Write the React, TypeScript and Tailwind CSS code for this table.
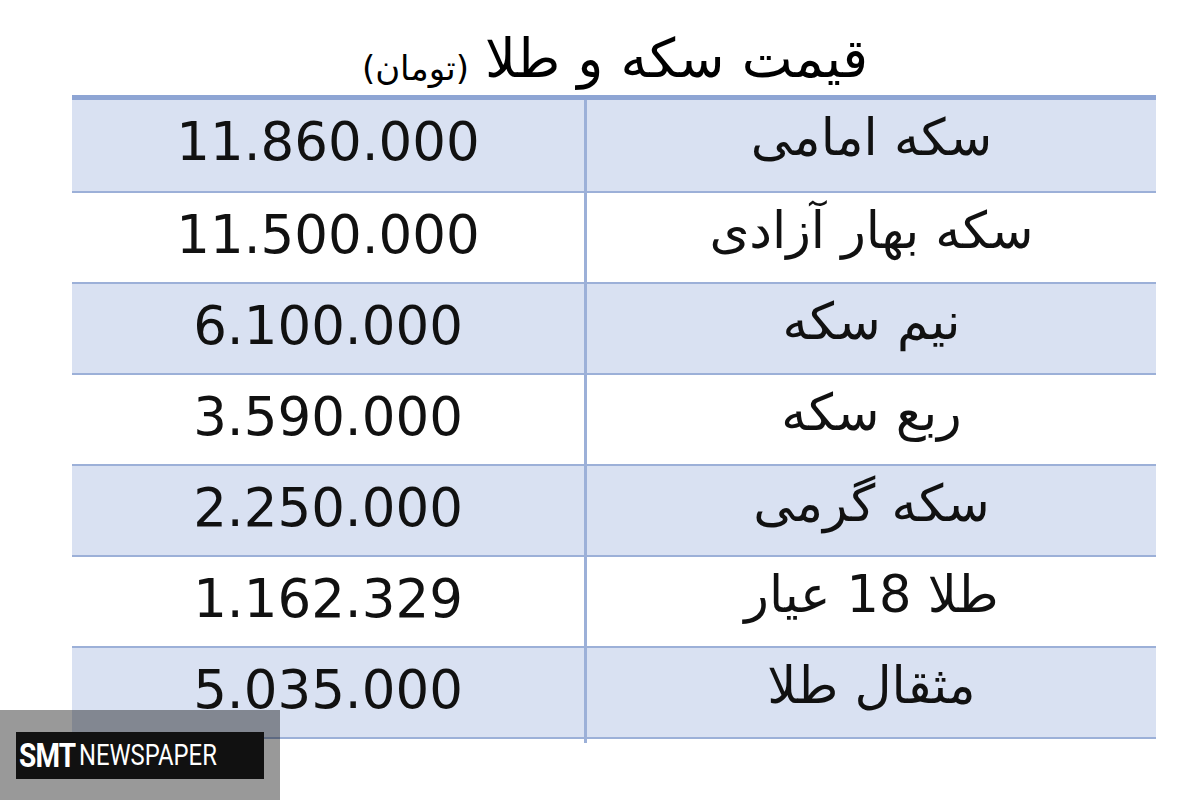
const rows = [
  { name: 'سکه امامی', price: '11.860.000' },
  { name: 'سکه بهار  آزادی', price: '11.500.000' },
  { name: 'نیم سکه', price: '6.100.000' },
  { name: 'ربع سکه', price: '3.590.000' },
  { name: 'سکه گرمی', price: '2.250.000' },
  { name: 'طلا 18 عیار', price: '1.162.329' },
  { name: 'مثقال طلا', price: '5.035.000' },
];

export default function App() {
  return (
    <div className="relative w-[1200px] h-[800px] bg-white overflow-hidden" style={{ fontFamily: '"DejaVu Sans", sans-serif' }}>
      {/* title */}
      <div dir="rtl" className="flex items-end justify-center gap-4 h-[95px] pl-[30px] pb-[4px] text-black">
        <span className="text-[54px] leading-[64px]">قیمت سکه و طلا</span>
        <span className="text-[34px] leading-[46px]">(تومان)</span>
      </div>

      {/* table */}
      <div className="ml-[72px] w-[1084px] border-t-[5px] border-[#8ea5d4]">
        {rows.map((row, i) => (
          <div
            key={row.price}
            className={
              'grid grid-cols-[515px_1fr] border-b-2 border-[#9cb0d8] ' +
              (i === 0 ? 'h-[93px] ' : 'h-[91px] ') +
              (i % 2 === 0 ? 'bg-[#d9e1f2]' : 'bg-white')
            }
          >
            <div className="flex items-center justify-center border-r-[3px] border-[#9cb0d8] pb-[12px] text-[53px] text-[#111]">
              {row.price}
            </div>
            <div dir="rtl" className="flex items-center justify-center pb-[18px] text-[51px] text-[#111]">
              {row.name}
            </div>
          </div>
        ))}
      </div>

      {/* watermark */}
      <div className="absolute left-0 bottom-0 w-[280px] h-[90px] bg-black/40 flex items-center pl-[16px]">
        <div className="w-[248px] h-[47px] bg-[#111] flex items-center pl-[3px] text-white" style={{ fontFamily: 'Roboto, sans-serif' }}>
          <span className="inline-block origin-left scale-x-[0.85] text-[33px] font-bold tracking-[-1px] leading-none">SMT</span>
          <span className="inline-block origin-left -ml-[6px] scale-x-[0.82] text-[29px] leading-none">NEWSPAPER</span>
        </div>
      </div>
    </div>
  );
}
